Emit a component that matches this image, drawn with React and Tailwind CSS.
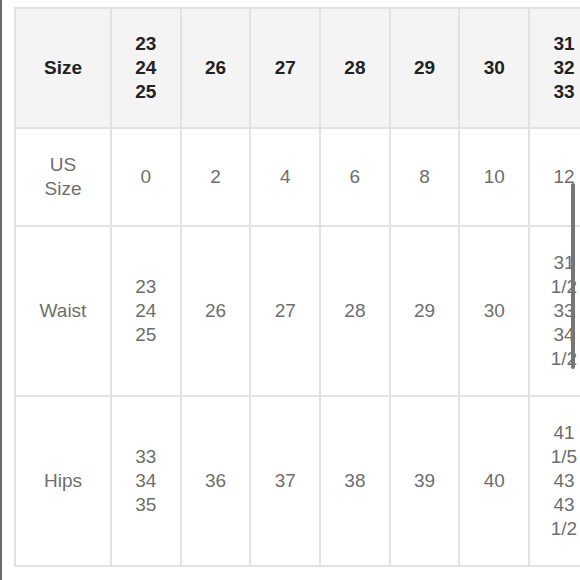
import React from "react";

const header = ["Size", ["23", "24", "25"], "26", "27", "28", "29", "30", ["31", "32", "33"]];
const rows = [
  [["US", "Size"], "0", "2", "4", "6", "8", "10", "12"],
  ["Waist", ["23", "24", "25"], "26", "27", "28", "29", "30", ["31", "1/2", "33", "34", "1/2"]],
  ["Hips", ["33", "34", "35"], "36", "37", "38", "39", "40", ["41", "1/5", "43", "43", "1/2"]],
];

function Lines({ v }) {
  const arr = Array.isArray(v) ? v : [v];
  return (
    <div className="flex flex-col items-center">
      {arr.map((t, i) => (
        <span key={i} className="whitespace-nowrap">{t}</span>
      ))}
    </div>
  );
}

export default function App() {
  return (
    <div
      className="relative flex h-[580px] w-[580px] overflow-hidden bg-white"
      style={{ fontFamily: '"Liberation Sans", Arial, sans-serif' }}
    >
      <div className="h-full w-[2px] shrink-0 bg-[#6a6a6a]" />
      <div className="pl-[12px] pt-[7px]">
        <div className="grid grid-cols-[96px_repeat(7,69.7px)] border-l-2 border-t-2 border-[#e2e2e2] text-[19px] leading-[24px]">
          {header.map((h, i) => (
            <div
              key={"h" + i}
              className="flex items-center justify-center border-b-2 border-r-2 border-[#e2e2e2] bg-[#f4f4f4] py-[23px] font-bold text-[#222]"
            >
              <Lines v={h} />
            </div>
          ))}
          {rows.map((r, ri) =>
            r.map((c, ci) => (
              <div
                key={ri + "-" + ci}
                className="flex items-center justify-center border-b-2 border-r-2 border-[#e2e2e2] py-6 text-[#6e6e6e]"
              >
                <Lines v={c} />
              </div>
            ))
          )}
        </div>
      </div>
      <div className="absolute left-[571px] top-[183px] h-[186px] w-[4px] rounded-full bg-[#767676]" />
    </div>
  );
}
